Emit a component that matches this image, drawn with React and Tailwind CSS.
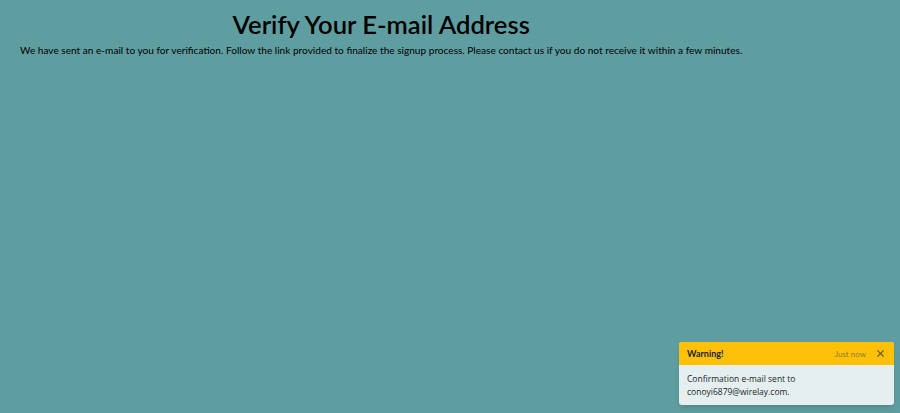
export default function App() {
  return (
    <div
      className="relative h-[413px] w-[900px] overflow-hidden bg-[#5f9ea0] text-black"
      style={{ fontFamily: 'Lato, "Open Sans", sans-serif' }}
    >
      <div className="ml-5 w-fit pt-[8px]">
        <h1 className="text-center text-[25.6px] font-semibold leading-[32px]">
          Verify Your E-mail Address
        </h1>
        <p className="mt-[2px] text-[10.1px] leading-[16px]">
          We have sent an e-mail to you for verification. Follow the link provided to finalize the signup
          process. Please contact us if you do not receive it within a few minutes.
        </p>
      </div>

      <div className="absolute left-[679px] top-[342px] w-[215px] overflow-hidden rounded-[3px] bg-[#e6eff0] shadow-md">
        <div className="flex h-[23px] items-center bg-[#ffc107] px-2">
          <strong className="text-[9px] font-bold text-[#212529]">Warning!</strong>
          <small className="ml-auto text-[8px] text-[#8a7a3a]">Just now</small>
          <button className="ml-2 flex h-3 w-3 items-center justify-center text-[#5c5430]">
            <svg width="9" height="9" viewBox="0 0 10 10" fill="none" stroke="currentColor" strokeWidth="1.3">
              <path d="M1.5 1.5l7 7M8.5 1.5l-7 7" />
            </svg>
          </button>
        </div>
        <div
          className="px-2 pb-[7px] pt-[7px] text-[8.5px] leading-[13px] text-[#212529]"
          style={{ fontFamily: '"Open Sans", sans-serif' }}
        >
          Confirmation e-mail sent to
          <br />
          conoyi6879@wirelay.com.
        </div>
      </div>
    </div>
  );
}
